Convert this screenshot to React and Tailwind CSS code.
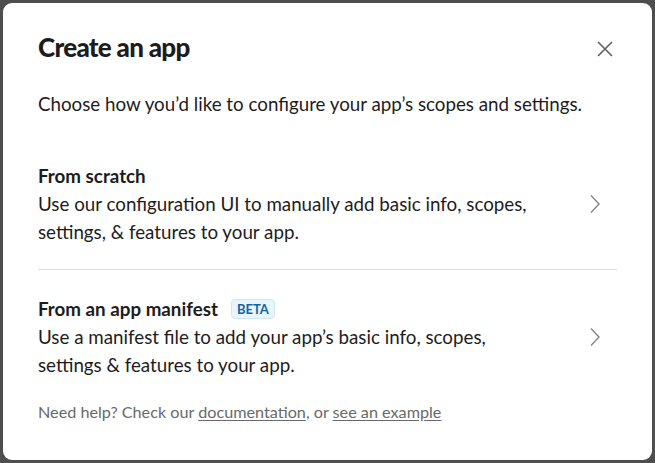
function Option({ title, badge, text }) {
    return (
        <button className="flex w-full items-center justify-between text-left">
            <div className="w-[512px]">
                <div className="flex items-center gap-[13px] text-[18.75px] font-bold leading-[28px] text-[#1d1c1d]">
                    {title}
                    {badge && (
                        <span className="rounded-[4px] border border-[#cfe7f5] bg-[#e8f5fa] px-[5px] text-[13px] font-bold leading-[18px] text-[#1264a3]">
                            {badge}
                        </span>
                    )}
                </div>
                <p className="text-[18.75px] leading-[28px] text-[#1d1c1d]">{text}</p>
            </div>
            <svg width="12" height="20" viewBox="0 0 12 20" className="mr-[16px] text-[#868686]" fill="none" stroke="currentColor" strokeWidth="1.4">
                <path d="M2 1.5l8 8.5-8 8.5" />
            </svg>
        </button>
    );
}

export default function App() {
    return (
        <div className="flex h-[463px] w-[655px] bg-[#4e4e4e] p-[3px] font-['Lato',sans-serif]">
            <div className="flex w-full flex-col rounded-[9px] bg-white px-[35px] pt-[28px]">
                <div className="flex items-center justify-between">
                    <h1 className="text-[26px] font-black leading-[32px] tracking-[-0.7px] text-[#1d1c1d]">Create an app</h1>
                    <svg width="16" height="16" viewBox="0 0 16 16" className="mr-[4px] mt-[4px]" fill="none" stroke="#616061" strokeWidth="1.6">
                        <path d="M1 1l14 14M15 1L1 15" />
                    </svg>
                </div>
                <p className="mt-[27px] text-[18.75px] leading-[28px] text-[#1d1c1d]">
                    Choose how you’d like to configure your app’s scopes and settings.
                </p>
                <div className="mt-[22px] pb-[23px] pt-[22px]">
                    <Option
                        title="From scratch"
                        text="Use our configuration UI to manually add basic info, scopes, settings, & features to your app."
                    />
                </div>
                <div className="h-px w-full bg-[#dddddd]" />
                <div className="pt-[25px]">
                    <Option
                        title="From an app manifest"
                        badge="BETA"
                        text="Use a manifest file to add your app’s basic info, scopes, settings & features to your app."
                    />
                </div>
                <p className="mt-[22px] text-[16.2px] leading-[22px] text-[#696969]">
                    Need help? Check our <a className="underline underline-offset-2">documentation</a>, or{" "}
                    <a className="underline underline-offset-2">see an example</a>
                </p>
            </div>
        </div>
    );
}
